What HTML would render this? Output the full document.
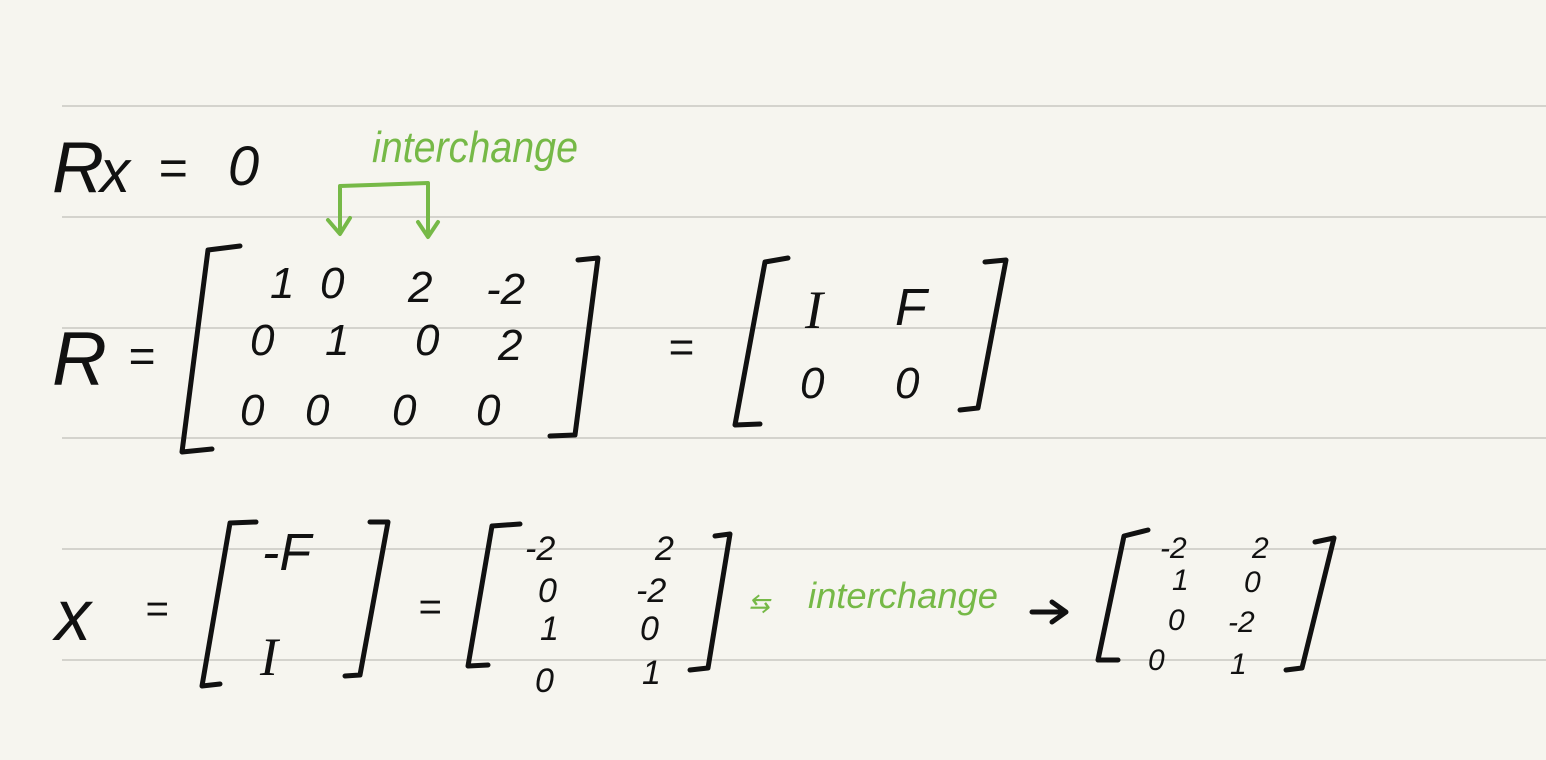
<!DOCTYPE html>
<html><head><style>
html,body{margin:0;padding:0;width:1546px;height:760px;overflow:hidden;background:#f6f5ef;}
svg{position:absolute;left:0;top:0;}
text{font-family:"Liberation Sans",sans-serif;fill:#111;font-style:italic;}
.g{fill:#76b947;}
.s{font-family:"Liberation Serif",serif;}
</style></head><body>
<svg width="1546" height="760" viewBox="0 0 1546 760">
<g stroke="#d4d3cd" stroke-width="2">
<line x1="62" y1="106" x2="1546" y2="106"/><line x1="62" y1="217" x2="1546" y2="217"/>
<line x1="62" y1="328" x2="1546" y2="328"/><line x1="62" y1="438" x2="1546" y2="438"/>
<line x1="62" y1="549" x2="1546" y2="549"/><line x1="62" y1="660" x2="1546" y2="660"/>
</g>
<text x="52" y="192" font-size="72">R</text><text x="100" y="192" font-size="60">x</text>
<text x="158" y="185" font-size="50">=</text><text x="228" y="185" font-size="56">0</text>
<text x="372" y="162" font-size="44" class="g" textLength="206" lengthAdjust="spacingAndGlyphs">interchange</text>
<g fill="none" stroke="#76b947" stroke-width="4" stroke-linecap="round" stroke-linejoin="round">
<path d="M340 232 L340 186 L428 183 L428 236"/><path d="M328 220 L340 234 L350 218"/><path d="M418 222 L428 237 L438 222"/>
</g>
<text x="52" y="385" font-size="76">R</text><text x="128" y="372" font-size="46">=</text>
<g fill="none" stroke="#111" stroke-width="5" stroke-linecap="round" stroke-linejoin="round">
<path d="M240 246 L208 250 L182 452 L212 449"/><path d="M578 260 L598 258 L575 435 L550 436"/>
<path d="M788 258 L765 262 L735 425 L760 424"/><path d="M985 262 L1006 260 L978 408 L960 410"/>
<path d="M256 522 L230 523 L202 686 L220 684"/><path d="M370 522 L388 522 L360 675 L345 676"/>
<path d="M520 524 L492 526 L468 666 L488 665"/><path d="M715 536 L730 534 L708 668 L690 670"/>
<path d="M1148 530 L1124 536 L1098 660 L1118 660"/><path d="M1315 542 L1334 538 L1302 668 L1286 670"/>
<path d="M1032 612 L1064 612 M1052 602 L1066 612 L1052 622"/>
</g>
<g font-size="44">
<text x="270" y="298">1</text><text x="320" y="298">0</text><text x="408" y="302">2</text><text x="486" y="304">-2</text>
<text x="250" y="355">0</text><text x="325" y="355">1</text><text x="415" y="355">0</text><text x="498" y="360">2</text>
<text x="240" y="425">0</text><text x="305" y="425">0</text><text x="392" y="425">0</text><text x="476" y="425">0</text>
<text x="668" y="362">=</text>
<text x="805" y="328" font-size="54" class="s">I</text><text x="895" y="325" font-size="52">F</text>
<text x="800" y="398">0</text><text x="895" y="398">0</text>
</g>
<text x="55" y="640" font-size="72">x</text><text x="145" y="622" font-size="40">=</text>
<text x="262" y="570" font-size="52">-F</text><text x="260" y="675" font-size="54" class="s">I</text>
<text x="418" y="620" font-size="40">=</text>
<g font-size="34">
<text x="525" y="560">-2</text><text x="655" y="560">2</text>
<text x="538" y="602">0</text><text x="636" y="602">-2</text>
<text x="540" y="640">1</text><text x="640" y="640">0</text>
<text x="535" y="692">0</text><text x="642" y="684">1</text>
</g>
<text x="748" y="612" font-size="26" class="g">⇆</text>
<text x="808" y="608" font-size="36" class="g" textLength="190" lengthAdjust="spacingAndGlyphs">interchange</text>
<g font-size="30">
<text x="1160" y="558">-2</text><text x="1252" y="558">2</text>
<text x="1172" y="590">1</text><text x="1244" y="592">0</text>
<text x="1168" y="630">0</text><text x="1228" y="632">-2</text>
<text x="1148" y="670">0</text><text x="1230" y="674">1</text>
</g>
</svg>
</body></html>
